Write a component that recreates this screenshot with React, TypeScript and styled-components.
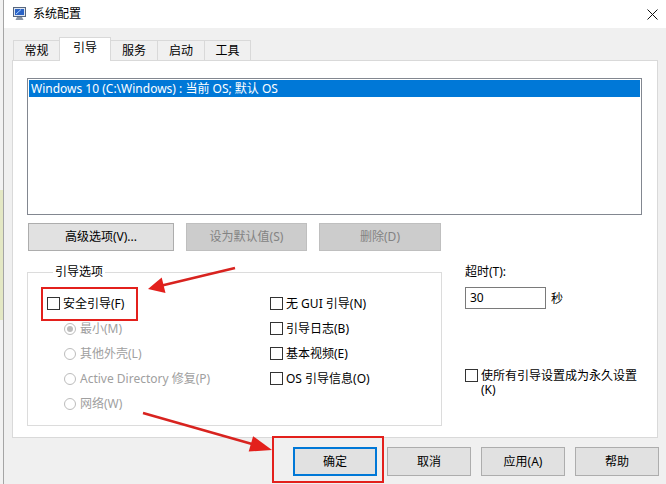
import React from 'react'
import styled, { createGlobalStyle } from 'styled-components'

const GlobalStyle = createGlobalStyle`
  html, body {
    margin: 0;
    padding: 0;
    background: #fff;
  }
  body {
    font-family: "Noto Sans", "Noto Sans CJK SC", sans-serif;
    font-size: 12px;
    color: #000;
  }
  * {
    box-sizing: border-box;
  }
`

const Screen = styled.div`
  position: relative;
  width: 666px;
  height: 484px;
  display: flex;
  overflow: hidden;
`

const Backdrop = styled.div`
  width: 3px;
  flex: none;
  background: linear-gradient(
    to bottom,
    #f2f2f2 0,
    #f2f2f2 190px,
    #e4e8c4 190px,
    #e4e8c4 320px,
    #f2f2f2 320px
  );
`

const Window = styled.div`
  flex: 1;
  display: flex;
  flex-direction: column;
  border-left: 1px solid #a5a5a5;
  background: #f0f0f0;
`

const TitleBar = styled.div`
  height: 28px;
  flex: none;
  display: flex;
  align-items: center;
  padding: 0 8px 0 9px;
  background: #fff;
`

const Title = styled.span`
  margin-left: 6px;
  line-height: 16px;
`

const CloseButton = styled.div`
  margin-left: auto;
  display: flex;
`

const Body = styled.div`
  flex: 1;
  display: flex;
  flex-direction: column;
  padding: 9px 8px 0;
`

const TabStrip = styled.div`
  display: flex;
  height: 24px;
  padding-left: 1px;
`

const Tab = styled.div<{ $active?: boolean; $w: number }>`
  position: relative;
  z-index: ${(p) => (p.$active ? 2 : 0)};
  width: ${(p) => p.$w}px;
  height: ${(p) => (p.$active ? 24 : 20)}px;
  margin-top: ${(p) => (p.$active ? 0 : 3)}px;
  margin-left: -1px;
  display: flex;
  align-items: center;
  justify-content: center;
  padding-bottom: ${(p) => (p.$active ? 3 : 0)}px;
  background: ${(p) => (p.$active ? '#fff' : '#f0f0f0')};
  border: 1px solid #d9d9d9;
  border-bottom: none;
  line-height: 16px;

  &:first-child {
    margin-left: 0;
  }
`

const TabPanel = styled.div`
  position: relative;
  z-index: 1;
  margin-top: -1px;
  height: 378px;
  background: #fff;
  border: 1px solid #d9d9d9;
  padding: 17px 15px 0 14px;
`

const ListBox = styled.div`
  height: 137px;
  border: 1px solid #828790;
  padding: 1px;
  background: #fff;
`

const ListItem = styled.div`
  height: 17px;
  line-height: 17px;
  padding-left: 2px;
  background: #0078d7;
  color: #fff;
  white-space: nowrap;
`

const ButtonRow = styled.div`
  display: flex;
  gap: 12px;
  margin-top: 8px;
  padding-left: 1px;
`

const PanelButton = styled.button<{ $w: number }>`
  width: ${(p) => p.$w}px;
  height: 28px;
  padding: 0;
  font: inherit;
  line-height: 16px;
  color: #000;
  background: #e1e1e1;
  border: 1px solid #adadad;

  &:disabled {
    color: #838383;
    background: #cccccc;
    border-color: #bfbfbf;
  }
`

const LowerSection = styled.div`
  display: flex;
  margin-top: 13px;
`

const BootGroup = styled.fieldset`
  width: 415px;
  height: 162px;
  margin: 0;
  padding: 11px 0 0 19px;
  border: 1px solid #dcdcdc;
  display: flex;
`

const GroupLegend = styled.legend`
  margin-left: 6px;
  padding: 0 2px;
  line-height: 16px;
`

const OptionColumn = styled.div<{ $w?: number }>`
  display: flex;
  flex-direction: column;
  width: ${(p) => (p.$w ? `${p.$w}px` : 'auto')};
`

const OptionRow = styled.div<{ $indent?: number; $muted?: boolean }>`
  height: 25px;
  display: flex;
  align-items: center;
  gap: ${(p) => (p.$indent ? 4 : 3)}px;
  padding-left: ${(p) => p.$indent || 0}px;
  color: ${(p) => (p.$muted ? '#a0a0a0' : '#000')};
  line-height: 16px;
  white-space: nowrap;
`

const CheckBox = styled.span`
  width: 13px;
  height: 13px;
  flex: none;
  border: 1px solid #333;
  background: #fff;
`

const Radio = styled.span<{ $checked?: boolean }>`
  width: 12px;
  height: 12px;
  flex: none;
  border-radius: 50%;
  border: 1px solid #bcbcbc;
  background: #fff;
  display: flex;
  align-items: center;
  justify-content: center;

  &::after {
    content: '';
    display: ${(p) => (p.$checked ? 'block' : 'none')};
    width: 6px;
    height: 6px;
    border-radius: 50%;
    background: #bcbcbc;
  }
`

const SideColumn = styled.div`
  margin-left: 23px;
  width: 177px;
  display: flex;
  flex-direction: column;
`

const FieldLabel = styled.div`
  line-height: 16px;
`

const TimeoutRow = styled.div`
  display: flex;
  align-items: center;
  gap: 5px;
  margin-top: 7px;
`

const TimeoutInput = styled.div`
  width: 81px;
  height: 22px;
  border: 1px solid #7a7a7a;
  background: #fff;
  padding-left: 4px;
  line-height: 20px;
`

const PermanentRow = styled.div`
  display: flex;
  align-items: flex-start;
  gap: 3px;
  margin-top: 60px;
  line-height: 14px;
`

const PermanentText = styled.span`
  width: 160px;
`

const Footer = styled.div`
  display: flex;
  justify-content: flex-end;
  gap: 10px;
  margin-top: 9px;
  margin-right: -1px;
`

const DialogButton = styled.button<{ $primary?: boolean }>`
  width: 84px;
  height: 29px;
  padding: 0;
  font: inherit;
  line-height: 16px;
  color: #000;
  background: #e1e1e1;
  border: ${(p) => (p.$primary ? '2px solid #0078d7' : '1px solid #adadad')};
`

const Annotations = styled.svg`
  position: absolute;
  left: 0;
  top: 0;
  z-index: 10;
  pointer-events: none;
`

const AppIcon = () => (
  <svg width="14" height="14" viewBox="0 0 14 14">
    <rect x="0.5" y="0.5" width="12" height="9" fill="#dfe6ef" stroke="#56667e" />
    <rect x="2" y="2" width="9" height="6" fill="#2b63c6" />
    <path d="M3 7 L8 2.5" stroke="#a9d2ff" strokeWidth="1" />
    <path d="M4 10 h5 l1.5 3 h-8 z" fill="#8893a3" />
  </svg>
)

const CloseIcon = () => (
  <svg width="11" height="11" viewBox="0 0 11 11">
    <path d="M0.5 0.5 L10.5 10.5 M10.5 0.5 L0.5 10.5" stroke="#111" strokeWidth="1" />
  </svg>
)

const tabs = [
  { label: '常规', w: 47 },
  { label: '引导', w: 52, active: true },
  { label: '服务', w: 48 },
  { label: '启动', w: 48 },
  { label: '工具', w: 47 },
]

const radios = ['最小(M)', '其他外壳(L)', 'Active Directory 修复(P)', '网络(W)']
const bootFlags = ['无 GUI 引导(N)', '引导日志(B)', '基本视频(E)', 'OS 引导信息(O)']

const App: React.FC = () => {
  return (
    <>
      <GlobalStyle />
      <Screen>
        <Backdrop />
        <Window>
          <TitleBar>
            <AppIcon />
            <Title>系统配置</Title>
            <CloseButton>
              <CloseIcon />
            </CloseButton>
          </TitleBar>
          <Body>
            <TabStrip>
              {tabs.map((t) => (
                <Tab key={t.label} $w={t.w} $active={t.active}>
                  {t.label}
                </Tab>
              ))}
            </TabStrip>
            <TabPanel>
              <ListBox>
                <ListItem>{'Windows 10 (C:\\Windows) : 当前 OS; 默认 OS'}</ListItem>
              </ListBox>
              <ButtonRow>
                <PanelButton $w={146}>高级选项(V)...</PanelButton>
                <PanelButton $w={121} disabled>
                  设为默认值(S)
                </PanelButton>
                <PanelButton $w={122} disabled>
                  删除(D)
                </PanelButton>
              </ButtonRow>
              <LowerSection>
                <BootGroup>
                  <GroupLegend>引导选项</GroupLegend>
                  <OptionColumn $w={223}>
                    <OptionRow>
                      <CheckBox />
                      安全引导(F)
                    </OptionRow>
                    {radios.map((r, i) => (
                      <OptionRow key={r} $indent={17} $muted>
                        <Radio $checked={i === 0} />
                        {r}
                      </OptionRow>
                    ))}
                  </OptionColumn>
                  <OptionColumn>
                    {bootFlags.map((f) => (
                      <OptionRow key={f}>
                        <CheckBox />
                        {f}
                      </OptionRow>
                    ))}
                  </OptionColumn>
                </BootGroup>
                <SideColumn>
                  <FieldLabel>超时(T):</FieldLabel>
                  <TimeoutRow>
                    <TimeoutInput>30</TimeoutInput>
                    <span>秒</span>
                  </TimeoutRow>
                  <PermanentRow>
                    <CheckBox />
                    <PermanentText>使所有引导设置成为永久设置(K)</PermanentText>
                  </PermanentRow>
                </SideColumn>
              </LowerSection>
            </TabPanel>
            <Footer>
              <DialogButton $primary>确定</DialogButton>
              <DialogButton>取消</DialogButton>
              <DialogButton>应用(A)</DialogButton>
              <DialogButton>帮助</DialogButton>
            </Footer>
          </Body>
        </Window>
        <Annotations width="666" height="484" viewBox="0 0 666 484">
          <rect x="42" y="288" width="95" height="32" fill="none" stroke="#e3201c" strokeWidth="2" />
          <rect x="273" y="437" width="110" height="45" fill="none" stroke="#e3201c" strokeWidth="2" />
          <line x1="235" y1="268" x2="162" y2="285.5" stroke="#d8231f" strokeWidth="2.5" />
          <polygon points="148,289 161.7,277.4 165.5,293" fill="#e3201c" />
          <line x1="143" y1="413" x2="252" y2="444" stroke="#d8231f" strokeWidth="2.5" />
          <polygon points="272,450 253.1,436.2 248.7,451.6" fill="#e3201c" />
        </Annotations>
      </Screen>
    </>
  )
}

export default App
